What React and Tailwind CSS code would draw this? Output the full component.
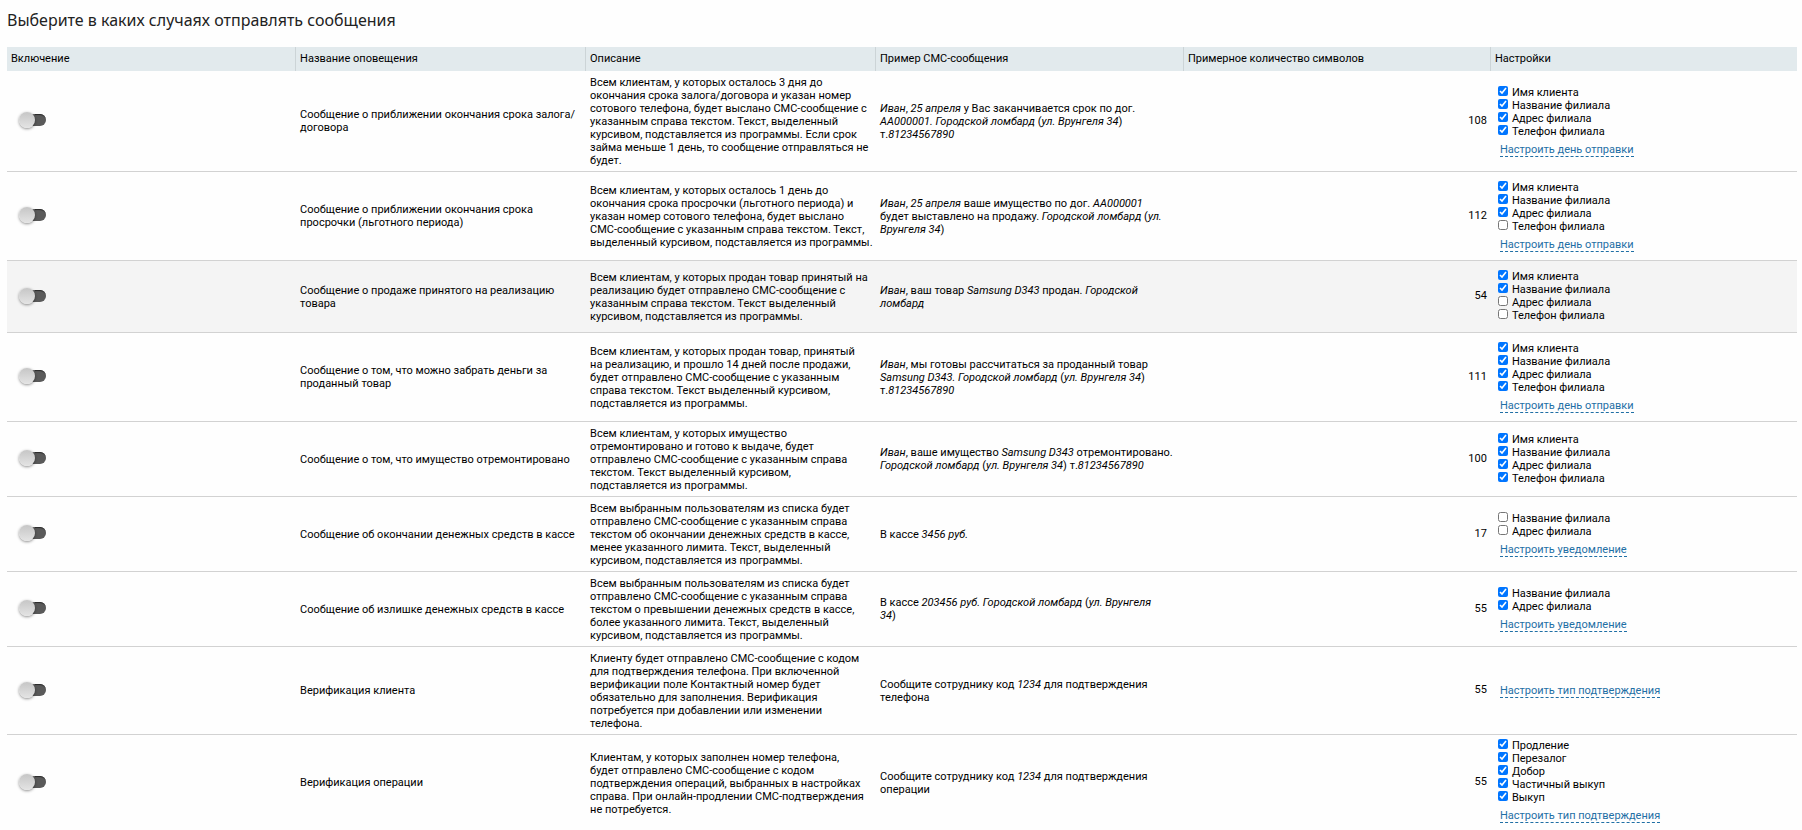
import { Fragment, useState } from 'react';

const NAME = 'Имя клиента';
const BRANCH = 'Название филиала';
const ADDRESS = 'Адрес филиала';
const PHONE = 'Телефон филиала';

// In samples, text between asterisks is substituted by the program and shown in italics.
const rows = [
  {
    title: ['Сообщение о приближении окончания срока залога/', 'договора'],
    description: [
      'Всем клиентам, у которых осталось 3 дня до',
      'окончания срока залога/договора и указан номер',
      'сотового телефона, будет выслано СМС-сообщение с',
      'указанным справа текстом. Текст, выделенный',
      'курсивом, подставляется из программы. Если срок',
      'займа меньше 1 день, то сообщение отправляться не',
      'будет.',
    ],
    sample: ['*Иван*, *25 апреля* у Вас заканчивается срок по дог.', '*АА000001. Городской ломбард* (*ул. Врунгеля 34*)', 'т.*81234567890*'],
    count: 108,
    options: [[NAME, true], [BRANCH, true], [ADDRESS, true], [PHONE, true]],
    link: 'Настроить день отправки',
  },
  {
    title: ['Сообщение о приближении окончания срока', 'просрочки (льготного периода)'],
    description: [
      'Всем клиентам, у которых осталось 1 день до',
      'окончания срока просрочки (льготного периода) и',
      'указан номер сотового телефона, будет выслано',
      'СМС-сообщение с указанным справа текстом. Текст,',
      'выделенный курсивом, подставляется из программы.',
    ],
    sample: ['*Иван*, *25 апреля* ваше имущество по дог. *АА000001*', 'будет выставлено на продажу. *Городской ломбард* (*ул.*', '*Врунгеля 34*)'],
    count: 112,
    options: [[NAME, true], [BRANCH, true], [ADDRESS, true], [PHONE, false]],
    link: 'Настроить день отправки',
  },
  {
    title: ['Сообщение о продаже принятого на реализацию', 'товара'],
    description: [
      'Всем клиентам, у которых продан товар принятый на',
      'реализацию будет отправлено СМС-сообщение с',
      'указанным справа текстом. Текст выделенный',
      'курсивом, подставляется из программы.',
    ],
    sample: ['*Иван*, ваш товар *Samsung D343* продан. *Городской*', '*ломбард*'],
    count: 54,
    options: [[NAME, true], [BRANCH, true], [ADDRESS, false], [PHONE, false]],
    active: true,
  },
  {
    title: ['Сообщение о том, что можно забрать деньги за', 'проданный товар'],
    description: [
      'Всем клиентам, у которых продан товар, принятый',
      'на реализацию, и прошло 14 дней после продажи,',
      'будет отправлено СМС-сообщение с указанным',
      'справа текстом. Текст выделенный курсивом,',
      'подставляется из программы.',
    ],
    sample: ['*Иван*, мы готовы рассчитаться за проданный товар', '*Samsung D343. Городской ломбард* (*ул. Врунгеля 34*)', 'т.*81234567890*'],
    count: 111,
    options: [[NAME, true], [BRANCH, true], [ADDRESS, true], [PHONE, true]],
    link: 'Настроить день отправки',
  },
  {
    title: ['Сообщение о том, что имущество отремонтировано'],
    description: [
      'Всем клиентам, у которых имущество',
      'отремонтировано и готово к выдаче, будет',
      'отправлено СМС-сообщение с указанным справа',
      'текстом. Текст выделенный курсивом,',
      'подставляется из программы.',
    ],
    sample: ['*Иван*, ваше имущество *Samsung D343* отремонтировано.', '*Городской ломбард* (*ул. Врунгеля 34*) т.*81234567890*'],
    count: 100,
    options: [[NAME, true], [BRANCH, true], [ADDRESS, true], [PHONE, true]],
  },
  {
    title: ['Сообщение об окончании денежных средств в кассе'],
    description: [
      'Всем выбранным пользователям из списка будет',
      'отправлено СМС-сообщение с указанным справа',
      'текстом об окончании денежных средств в кассе,',
      'менее указанного лимита. Текст, выделенный',
      'курсивом, подставляется из программы.',
    ],
    sample: ['В кассе *3456 руб.*'],
    count: 17,
    options: [[BRANCH, false], [ADDRESS, false]],
    link: 'Настроить уведомление',
  },
  {
    title: ['Сообщение об излишке денежных средств в кассе'],
    description: [
      'Всем выбранным пользователям из списка будет',
      'отправлено СМС-сообщение с указанным справа',
      'текстом о превышении денежных средств в кассе,',
      'более указанного лимита. Текст, выделенный',
      'курсивом, подставляется из программы.',
    ],
    sample: ['В кассе *203456 руб. Городской ломбард* (*ул. Врунгеля*', '*34*)'],
    count: 55,
    options: [[BRANCH, true], [ADDRESS, true]],
    link: 'Настроить уведомление',
  },
  {
    title: ['Верификация клиента'],
    description: [
      'Клиенту будет отправлено СМС-сообщение с кодом',
      'для подтверждения телефона. При включенной',
      'верификации поле Контактный номер будет',
      'обязательно для заполнения. Верификация',
      'потребуется при добавлении или изменении',
      'телефона.',
    ],
    sample: ['Сообщите сотруднику код *1234* для подтверждения', 'телефона'],
    count: 55,
    options: [],
    link: 'Настроить тип подтверждения',
  },
  {
    title: ['Верификация операции'],
    description: [
      'Клиентам, у которых заполнен номер телефона,',
      'будет отправлено СМС-сообщение с кодом',
      'подтверждения операций, выбранных в настройках',
      'справа. При онлайн-продлении СМС-подтверждения',
      'не потребуется.',
    ],
    sample: ['Сообщите сотруднику код *1234* для подтверждения', 'операции'],
    count: 55,
    options: [['Продление', true], ['Перезалог', true], ['Добор', true], ['Частичный выкуп', true], ['Выкуп', true]],
    link: 'Настроить тип подтверждения',
    compact: true,
  },
];

const columns = [
  ['Включение', 'w-[16.15%]'],
  ['Название оповещения', 'w-[16.2%]'],
  ['Описание', 'w-[16.2%]'],
  ['Пример СМС-сообщения', 'w-[17.2%]'],
  ['Примерное количество символов', 'w-[17.15%]'],
  ['Настройки', ''],
];

function Lines({ lines }) {
  return lines.map((line, i) => (
    <Fragment key={i}>
      {i > 0 && <br />}
      {line.split('*').map((part, j) => (j % 2 ? <i key={j}>{part}</i> : part))}
    </Fragment>
  ));
}

function Toggle({ label }) {
  const [on, setOn] = useState(false);
  return (
    <button
      type="button"
      role="switch"
      aria-checked={on}
      aria-label={label}
      onClick={() => setOn(!on)}
      className={`flex h-3 w-[27px] items-center rounded-full bg-[linear-gradient(to_right,transparent_8px,#5a5a5a_8px)] ${on ? 'flex-row-reverse' : ''}`}
    >
      <span className="size-4 shrink-0 rounded-full bg-linear-to-b from-[#c6c6c6] to-[#e4e4e4] shadow-[0_1px_3px_rgba(0,0,0,0.45)]" />
      <span className="h-3 flex-1 rounded-r-full shadow-[inset_0_2px_1px_-1px_#2a2a2a]" />
    </button>
  );
}

function Settings({ id, options, link, compact }) {
  const pad = !options.length ? '' : compact ? 'pt-px pb-[5px]' : link ? 'pt-1.5 pb-1.5' : 'pt-1.5 pb-[7px]';
  return (
    <div className={pad}>
      {options.map(([label, checked], i) => (
        <div key={label} className="flex h-[13px] items-start gap-1 pl-[3px]">
          <input
            id={`${id}-${i}`}
            type="checkbox"
            defaultChecked={checked}
            className="size-2.5 accent-[#0075ff]"
          />
          <label htmlFor={`${id}-${i}`}>{label}</label>
        </div>
      ))}
      {link && (
        <div className={options.length ? 'mt-[5px] pl-[5px]' : 'pl-[5px]'}>
          <a href="#" className="border-b border-dashed border-[#1f6fa5] text-[#1f6fa5]">
            {link}
          </a>
        </div>
      )}
    </div>
  );
}

export default function App() {
  return (
    <main className="bg-[#fefefe] pt-2 pr-[5px] pl-[7px] font-['Roboto',sans-serif] text-[11px] leading-[13px] text-black">
      <h1 className="mb-[15px] font-['Noto_Sans',sans-serif] text-[16px] leading-6 text-[#222]">
        Выберите в каких случаях отправлять сообщения
      </h1>
      <table className="w-full table-fixed border-separate border-spacing-0">
        <thead>
          <tr className="bg-[#e2eaed] text-left">
            {columns.map(([title, width]) => (
              <th key={title} className={`h-6 border-r border-[#ccd4d7] px-1 pb-0.5 font-normal last:border-r-0 ${width}`}>
                {title}
              </th>
            ))}
          </tr>
        </thead>
        <tbody className="[&>tr:last-child>td]:border-b-0">
          {rows.map((row, i) => (
            <tr key={i} className={row.active ? 'bg-[#f4f4f4]' : 'hover:bg-[#f4f4f4]'}>
              <td className="border-b border-[#d2d2d2] pb-0.5 pl-3">
                <Toggle label={row.title.join(' ')} />
              </td>
              <td className="border-b border-[#d2d2d2] pl-1">
                <Lines lines={row.title} />
              </td>
              <td className="border-b border-[#d2d2d2] pt-[5px] pb-1 pl-1">
                <Lines lines={row.description} />
              </td>
              <td className="border-b border-[#d2d2d2] pl-1">
                <Lines lines={row.sample} />
              </td>
              <td className="border-b border-[#d2d2d2] pr-1 pb-0.5 text-right">{row.count}</td>
              <td className="border-b border-[#d2d2d2] py-[3px] pl-1">
                <Settings id={`row-${i}`} {...row} />
              </td>
            </tr>
          ))}
        </tbody>
      </table>
    </main>
  );
}
